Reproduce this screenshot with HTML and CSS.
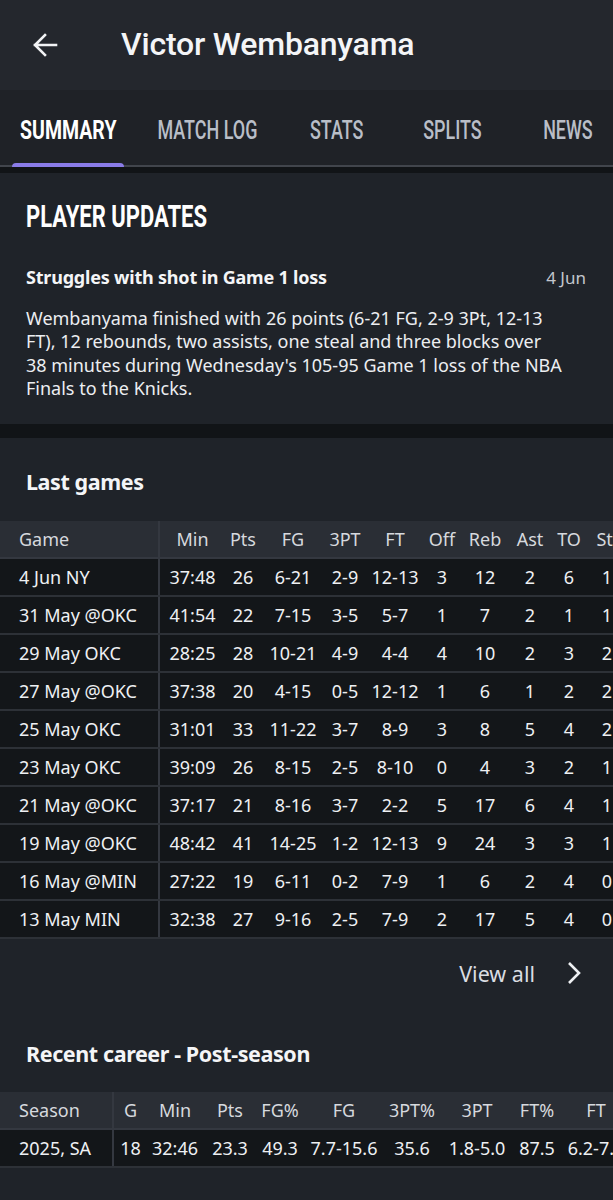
FILE: index.html
```html
<!DOCTYPE html>
<html lang="en">
<head>
<meta charset="utf-8">
<title>Victor Wembanyama</title>
<link rel="stylesheet" href="styles.css">
</head>
<body>
<header class="appbar">
  <button class="back" aria-label="Back">
    <svg viewBox="0 0 26 26" width="26" height="26"><path d="M24 13H3M13 3L3 13l10 10" fill="none" stroke="#f2f3f5" stroke-width="2.6" stroke-linecap="square" stroke-linejoin="miter"/></svg>
  </button>
  <h1 class="title">Victor Wembanyama</h1>
</header>
<nav class="tabs">
  <a class="tab tab-summary active"><span class="tab-label">SUMMARY</span></a>
  <a class="tab tab-log"><span class="tab-label">MATCH LOG</span></a>
  <a class="tab tab-stats"><span class="tab-label">STATS</span></a>
  <a class="tab tab-splits"><span class="tab-label">SPLITS</span></a>
  <a class="tab tab-news"><span class="tab-label">NEWS</span></a>
</nav>
<main>
  <section class="card updates">
    <h2 class="card-heading"><span class="condensed">PLAYER UPDATES</span></h2>
    <article class="update">
      <div class="update-head">
        <h3 class="update-title">Struggles with shot in Game 1 loss</h3>
        <time class="update-date">4 Jun</time>
      </div>
      <p class="update-body">Wembanyama finished with 26 points (6-21 FG, 2-9 3Pt, 12-13<br>FT), 12 rebounds, two assists, one steal and three blocks over<br>38 minutes during Wednesday's 105-95 Game 1 loss of the NBA<br>Finals to the Knicks.</p>
    </article>
  </section>
  <section class="card games">
    <h3 class="section-title">Last games</h3>
    <div class="table-scroll">
      <table class="stats log">
        <colgroup>
          <col style="width:159px"><col style="width:66px"><col style="width:36px"><col style="width:64px"><col style="width:40px"><col style="width:60px"><col style="width:34px"><col style="width:52px"><col style="width:38px"><col style="width:40px"><col style="width:36px">
        </colgroup>
        <thead>
          <tr><th>Game</th><th>Min</th><th>Pts</th><th>FG</th><th>3PT</th><th>FT</th><th>Off</th><th>Reb</th><th>Ast</th><th>TO</th><th>Stl</th></tr>
        </thead>
        <tbody>
          <tr><td>4 Jun NY</td><td>37:48</td><td>26</td><td>6-21</td><td>2-9</td><td>12-13</td><td>3</td><td>12</td><td>2</td><td>6</td><td>1</td></tr>
          <tr><td>31 May @OKC</td><td>41:54</td><td>22</td><td>7-15</td><td>3-5</td><td>5-7</td><td>1</td><td>7</td><td>2</td><td>1</td><td>1</td></tr>
          <tr><td>29 May OKC</td><td>28:25</td><td>28</td><td>10-21</td><td>4-9</td><td>4-4</td><td>4</td><td>10</td><td>2</td><td>3</td><td>2</td></tr>
          <tr><td>27 May @OKC</td><td>37:38</td><td>20</td><td>4-15</td><td>0-5</td><td>12-12</td><td>1</td><td>6</td><td>1</td><td>2</td><td>2</td></tr>
          <tr><td>25 May OKC</td><td>31:01</td><td>33</td><td>11-22</td><td>3-7</td><td>8-9</td><td>3</td><td>8</td><td>5</td><td>4</td><td>2</td></tr>
          <tr><td>23 May OKC</td><td>39:09</td><td>26</td><td>8-15</td><td>2-5</td><td>8-10</td><td>0</td><td>4</td><td>3</td><td>2</td><td>1</td></tr>
          <tr><td>21 May @OKC</td><td>37:17</td><td>21</td><td>8-16</td><td>3-7</td><td>2-2</td><td>5</td><td>17</td><td>6</td><td>4</td><td>1</td></tr>
          <tr><td>19 May @OKC</td><td>48:42</td><td>41</td><td>14-25</td><td>1-2</td><td>12-13</td><td>9</td><td>24</td><td>3</td><td>3</td><td>1</td></tr>
          <tr><td>16 May @MIN</td><td>27:22</td><td>19</td><td>6-11</td><td>0-2</td><td>7-9</td><td>1</td><td>6</td><td>2</td><td>4</td><td>0</td></tr>
          <tr><td>13 May MIN</td><td>32:38</td><td>27</td><td>9-16</td><td>2-5</td><td>7-9</td><td>2</td><td>17</td><td>5</td><td>4</td><td>0</td></tr>
        </tbody>
      </table>
    </div>
    <a class="view-all">
      <span>View all</span>
      <svg viewBox="0 0 16 24" width="16" height="24"><path d="M3 2l10 10L3 22" fill="none" stroke="#eef0f3" stroke-width="2.6"/></svg>
    </a>
    <h3 class="section-title career-title">Recent career - Post-season</h3>
    <div class="table-scroll">
      <table class="stats career">
        <colgroup>
          <col style="width:113px"><col style="width:34px"><col style="width:56px"><col style="width:54px"><col style="width:46px"><col style="width:82px"><col style="width:54px"><col style="width:76px"><col style="width:44px"><col style="width:74px">
        </colgroup>
        <thead>
          <tr><th>Season</th><th>G</th><th>Min</th><th>Pts</th><th>FG%</th><th>FG</th><th>3PT%</th><th>3PT</th><th>FT%</th><th>FT</th></tr>
        </thead>
        <tbody>
          <tr><td>2025, SA</td><td>18</td><td>32:46</td><td>23.3</td><td>49.3</td><td>7.7-15.6</td><td>35.6</td><td>1.8-5.0</td><td>87.5</td><td>6.2-7.1</td></tr>
        </tbody>
      </table>
    </div>
  </section>
</main>
</body>
</html>
```
FILE: styles.css
```css
* { box-sizing: border-box; }

html, body {
  margin: 0;
  padding: 0;
}

body {
  background: #111417;
  color: #eef0f3;
  font-family: "Noto Sans", "Open Sans", sans-serif;
  width: 613px;
  overflow: hidden;
}

/* top app bar */
.appbar {
  height: 90px;
  background: #24272d;
  display: flex;
  align-items: center;
  padding-left: 32px;
}

.back {
  background: none;
  border: 0;
  padding: 0;
  width: 26px;
  height: 26px;
  display: flex;
  margin-right: 63px;
}

.title {
  margin: 0;
  font-family: Roboto, "Noto Sans", sans-serif;
  font-weight: 500;
  font-size: 32px;
  color: #f4f5f7;
  letter-spacing: -0.2px;
  position: relative;
  top: -1px;
}

/* tab strip */
.tabs {
  height: 77px;
  background: #1f2227;
  display: flex;
  border-bottom: 2px solid #41454c;
}

.tab {
  position: relative;
  display: flex;
  justify-content: center;
  align-items: center;
  font-family: Roboto, sans-serif;
  font-weight: 500;
  font-size: 26px;
  color: #b9bec7;
  flex: none;
}

.tab-summary { width: 136px; }
.tab-log { width: 143px; }
.tab-stats { width: 115px; }
.tab-splits { width: 117px; }
.tab-news { width: 113px; }

.tab-label {
  display: inline-block;
  white-space: nowrap;
  transform: scaleX(0.69);
  position: relative;
  top: 2px;
}

.tab.active {
  color: #ffffff;
  font-weight: 700;
}

.tab.active .tab-label {
  transform: scaleX(0.75);
}

.tab.active::after {
  content: "";
  position: absolute;
  left: 12px;
  right: 12px;
  bottom: -2px;
  height: 4px;
  border-radius: 4px 4px 0 0;
  background: #8a7ce8;
}

main {
  padding-top: 6px;
  display: flex;
  flex-direction: column;
  gap: 14px;
}

.card {
  background: #1f2329;
}

/* player updates */
.updates {
  padding: 27px 26px 24px;
}

.card-heading {
  margin: 0 0 31px;
  font-family: Roboto, sans-serif;
  font-weight: 700;
  font-size: 31px;
  line-height: 34px;
  color: #ffffff;
}

.condensed {
  display: inline-block;
  white-space: nowrap;
  transform: scaleX(0.71);
  transform-origin: left center;
}

.update-head {
  display: flex;
  justify-content: space-between;
  align-items: baseline;
  padding-right: 1px;
}

.update-title {
  margin: 0;
  font-size: 18px;
  font-weight: 700;
  letter-spacing: -0.2px;
  color: #f4f5f7;
}

.update-date {
  font-size: 17px;
  color: #c3c7ce;
}

.update-body {
  margin: 18px 0 0;
  font-size: 18px;
  line-height: 23.3px;
  color: #eceef1;
}

/* last games */
.games {
  padding: 29px 0 40px;
}

.section-title {
  margin: 0 0 25px 26px;
  font-size: 21.5px;
  font-weight: 700;
  letter-spacing: -0.4px;
  color: #f4f5f7;
}

.table-scroll {
  overflow: hidden;
  width: 613px;
}

.stats {
  border-collapse: collapse;
  table-layout: fixed;
  font-size: 18px;
  white-space: nowrap;
}

.log { width: 625px; }
.career { width: 633px; }

.stats th {
  background: #2a2e35;
  color: #d6d9de;
  font-weight: 400;
  height: 37px;
  text-align: center;
  padding: 0;
  border-bottom: 2px solid #343840;
}

.stats td {
  background: #131619;
  height: 38px;
  text-align: center;
  padding: 0;
  color: #eef0f3;
  border-bottom: 2px solid #2d3137;
}

.stats th:first-child,
.stats td:first-child {
  text-align: left;
  padding-left: 19px;
  border-right: 2px solid #343840;
}

.view-all {
  display: flex;
  justify-content: flex-end;
  align-items: center;
  gap: 31px;
  padding: 10px 31px 0 0;
  font-size: 21.5px;
  color: #dadde2;
  height: 48px;
  box-sizing: content-box;
}

.career-title {
  margin-top: 42px;
  margin-bottom: 24px;
}
```
